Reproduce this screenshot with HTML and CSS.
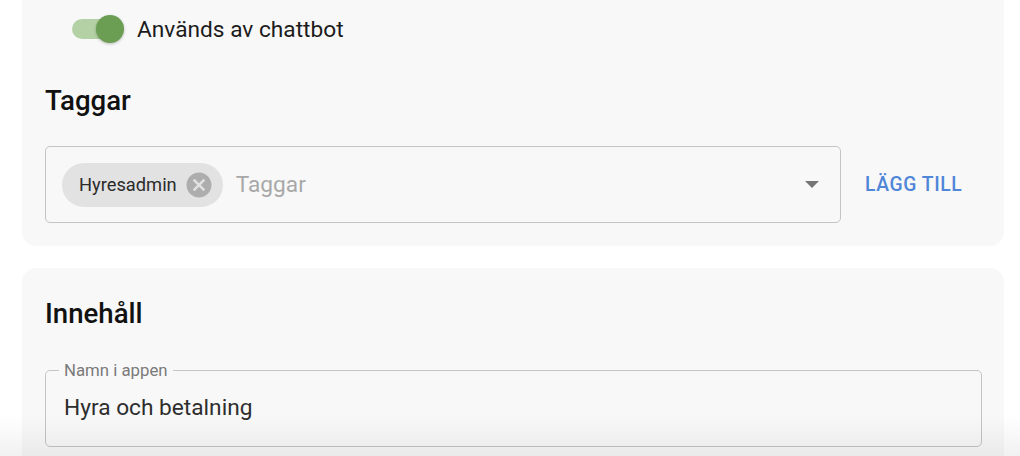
FILE: index.html
```html
<!DOCTYPE html>
<html lang="sv">
<head>
    <meta charset="UTF-8">
    <meta name="viewport" content="width=device-width, initial-scale=1.0">
    <title>Redigera artikel</title>
    <link rel="stylesheet" href="styles.css">
</head>
<body>
    <main class="page">
        <section class="card cardTop">
            <div class="switchRow">
                <span class="switch">
                    <span class="switchTrack"></span>
                    <span class="switchThumb"></span>
                </span>
                <span class="switchLabel">Används av chattbot</span>
            </div>

            <h2 class="cardTitle">Taggar</h2>

            <div class="tagRow">
                <div class="tagSelect">
                    <span class="chip">
                        <span class="chipText">Hyresadmin</span>
                        <svg class="chipDelete" viewBox="0 0 24 24" width="30" height="30">
                            <path d="M12 2C6.47 2 2 6.47 2 12s4.47 10 10 10 10-4.47 10-10S17.53 2 12 2zm5 13.59L15.59 17 12 13.41 8.41 17 7 15.59 10.59 12 7 8.41 8.41 7 12 10.59 15.59 7 17 8.41 13.41 12 17 15.59z"></path>
                        </svg>
                    </span>
                    <span class="placeholder">Taggar</span>
                    <svg class="dropArrow" viewBox="0 0 14 7" width="14" height="7">
                        <path d="M0 0h14L7 7z"></path>
                    </svg>
                </div>
                <button class="addButton">Lägg till</button>
            </div>
        </section>

        <section class="card">
            <h2 class="cardTitle contentTitle">Innehåll</h2>

            <fieldset class="outlinedField">
                <legend>Namn i appen</legend>
                <span class="fieldValue">Hyra och betalning</span>
            </fieldset>
        </section>
    </main>
    <div class="bottomFade"></div>
</body>
</html>
```

FILE: styles.css
```css
body {
    margin: 0;
    background: #ffffff;
    font-family: Roboto, "Liberation Sans", sans-serif;
    color: rgba(0, 0, 0, 0.87);
    height: 456px;
    overflow: hidden;
}

.page {
    padding: 0 16px 0 22px;
    display: flex;
    flex-direction: column;
    row-gap: 22px;
}

.card {
    width: 982px;
    box-sizing: border-box;
    background: #f8f8f8;
    border-radius: 14px;
    padding: 29px 22px 23px 23px;
}

.cardTop {
    border-radius: 0 0 14px 14px;
    padding-top: 14px;
}

.switchRow {
    display: flex;
    align-items: center;
    height: 30px;
    padding-left: 27px;
}

.switch {
    position: relative;
    width: 52px;
    height: 28px;
    display: flex;
    align-items: center;
}

.switchTrack {
    display: block;
    width: 46px;
    height: 20px;
    border-radius: 10px;
    background: #b3d1a4;
}

/* thumb sits over the track */
.switchThumb {
    position: absolute;
    left: 24px;
    top: 0;
    width: 28px;
    height: 28px;
    border-radius: 50%;
    background: #6b9e52;
    box-shadow: 0 1px 3px rgba(0, 0, 0, 0.25);
}

.switchLabel {
    margin-left: 13px;
    font-size: 22.7px;
    color: #1c1c1c;
}

.cardTitle {
    margin: 40px 0 0;
    font-size: 27.6px;
    font-weight: 500;
    line-height: 33px;
    color: #111111;
}

.contentTitle {
    margin-top: 0;
}

.tagRow {
    display: flex;
    align-items: center;
    column-gap: 24px;
    margin-top: 29px;
}

.tagSelect {
    flex: 1;
    height: 77px;
    box-sizing: border-box;
    border: 1px solid #c4c4c4;
    border-radius: 5px;
    display: flex;
    align-items: center;
    padding: 0 21px 0 16px;
}

.chip {
    display: flex;
    align-items: center;
    height: 44px;
    border-radius: 22px;
    background: #e2e2e2;
    padding: 0 9px 0 17px;
}

.chipText {
    font-size: 18.3px;
    color: #2b2b2b;
}

.chipDelete {
    margin-left: 7px;
    fill: #adadad;
}

.placeholder {
    margin-left: 13px;
    font-size: 22.7px;
    color: #a8a8a8;
    flex: 1;
}

.dropArrow {
    fill: #757575;
}

.addButton {
    width: 117px;
    padding: 0;
    border: none;
    background: none;
    text-align: left;
    text-transform: uppercase;
    font-family: Roboto, "Liberation Sans", sans-serif;
    font-size: 19.3px;
    font-weight: 500;
    letter-spacing: 0.6px;
    color: #4f86d8;
}

.outlinedField {
    margin: 32px 0 0;
    height: 85px;
    box-sizing: border-box;
    border: 1px solid #c4c4c4;
    border-radius: 5px;
    padding: 0 18px;
    display: flex;
    align-items: center;
}

.outlinedField legend {
    margin-left: -5px;
    padding: 0 5px;
    font-size: 16.8px;
    line-height: 1;
    color: #7a7a7a;
}

.fieldValue {
    margin-top: -9px;
    font-size: 22.7px;
    color: #2e2e2e;
}

/* soft shade along the bottom edge of the window */
.bottomFade {
    position: fixed;
    left: 0;
    right: 0;
    bottom: 0;
    height: 40px;
    background: linear-gradient(rgba(0, 0, 0, 0), rgba(0, 0, 0, 0.055));
    pointer-events: none;
}
```
